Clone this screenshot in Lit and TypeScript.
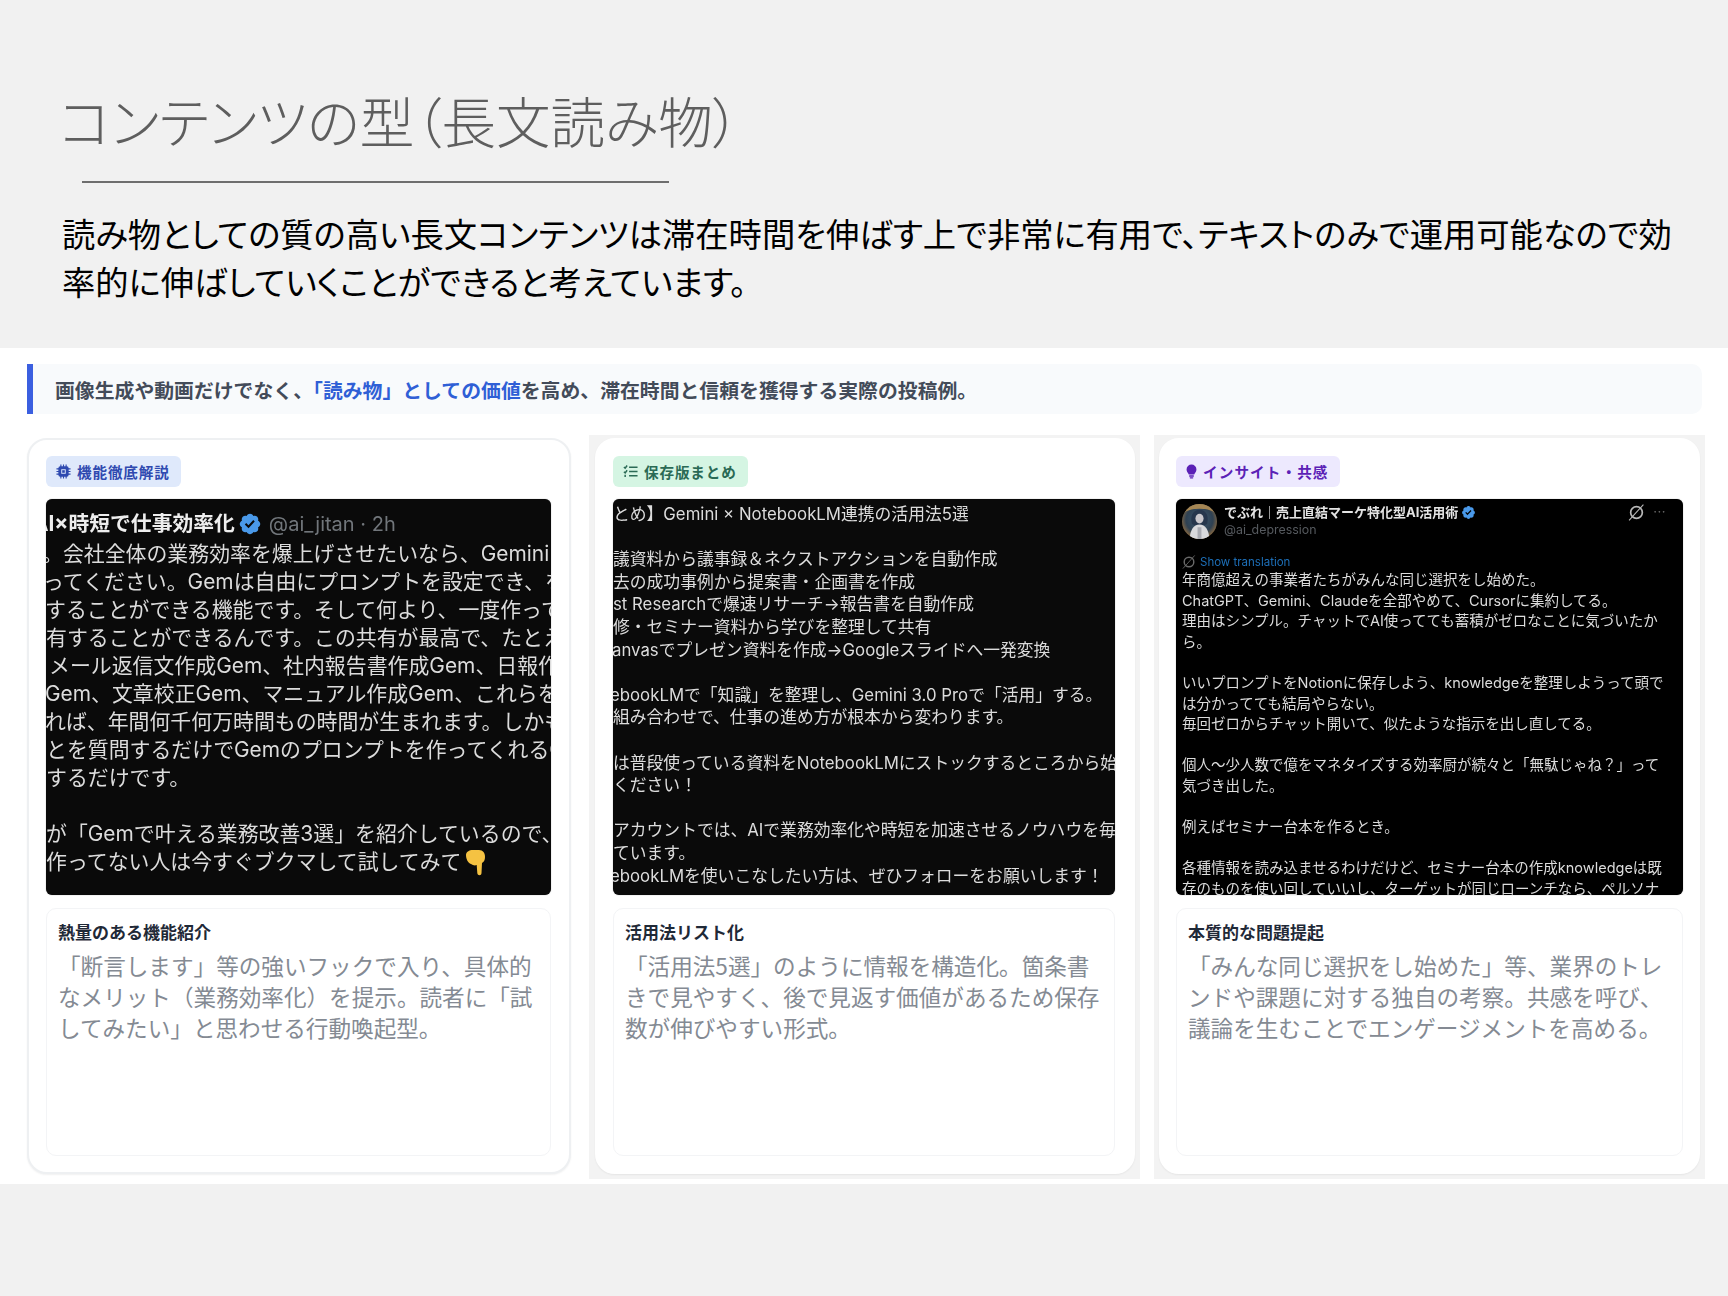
import { css, html, LitElement, nothing } from 'lit';
import { customElement } from 'lit/decorators.js';

type Line = { text: string; shift?: number };

const firstShot: Line[] = [
  { text: '。会社全体の業務効率を爆上げさせたいなら、Gemini', shift: -4 },
  { text: 'ってください。Gemは自由にプロンプトを設定でき、を', shift: -3 },
  { text: 'することができる機能です。そして何より、一度作って', shift: -1 },
  { text: '有することができるんです。この共有が最高で、たとえ', shift: 0 },
  { text: 'メール返信文作成Gem、社内報告書作成Gem、日報作', shift: 3 },
  { text: 'Gem、文章校正Gem、マニュアル作成Gem、これらを', shift: -1 },
  { text: 'れば、年間何千何万時間もの時間が生まれます。しかも', shift: -1 },
  { text: 'とを質問するだけでGemのプロンプトを作ってくれるG', shift: 0 },
  { text: 'するだけです。', shift: 0 },
  { text: '' },
  { text: 'が「Gemで叶える業務改善3選」を紹介しているので、', shift: 0 },
];

const secondShot: Line[] = [
  { text: 'とめ】Gemini × NotebookLM連携の活用法5選' },
  { text: '' },
  { text: '議資料から議事録＆ネクストアクションを自動作成' },
  { text: '去の成功事例から提案書・企画書を作成' },
  { text: 'st Researchで爆速リサーチ→報告書を自動作成' },
  { text: '修・セミナー資料から学びを整理して共有' },
  { text: 'anvasでプレゼン資料を作成→Googleスライドへ一発変換', shift: -1 },
  { text: '' },
  { text: 'ebookLMで「知識」を整理し、Gemini 3.0 Proで「活用」する。', shift: -3 },
  { text: '組み合わせで、仕事の進め方が根本から変わります。' },
  { text: '' },
  { text: 'は普段使っている資料をNotebookLMにストックするところから始' },
  { text: 'ください！' },
  { text: '' },
  { text: 'アカウントでは、AIで業務効率化や時短を加速させるノウハウを毎' },
  { text: 'ています。' },
  { text: 'ebookLMを使いこなしたい方は、ぜひフォローをお願いします！', shift: -3 },
];

const thirdShot: string[] = [
  '年商億超えの事業者たちがみんな同じ選択をし始めた。',
  'ChatGPT、Gemini、Claudeを全部やめて、Cursorに集約してる。',
  '理由はシンプル。チャットでAI使ってても蓄積がゼロなことに気づいたか',
  'ら。',
  '',
  'いいプロンプトをNotionに保存しよう、knowledgeを整理しようって頭で',
  'は分かってても結局やらない。',
  '毎回ゼロからチャット開いて、似たような指示を出し直してる。',
  '',
  '個人〜少人数で億をマネタイズする効率厨が続々と「無駄じゃね？」って',
  '気づき出した。',
  '',
  '例えばセミナー台本を作るとき。',
  '',
  '各種情報を読み込ませるわけだけど、セミナー台本の作成knowledgeは既',
  '存のものを使い回していいし、ターゲットが同じローンチなら、ペルソナ',
];

const verified = html`<svg class="verified" viewBox="0 0 24 24"><path fill="#4a99e9" fill-rule="evenodd" d="M22.25 12c0-1.43-.88-2.67-2.19-3.34.46-1.39.2-2.9-.81-3.91s-2.52-1.27-3.91-.81c-.66-1.31-1.91-2.19-3.34-2.19s-2.67.88-3.33 2.19c-1.4-.46-2.91-.2-3.92.81s-1.26 2.52-.8 3.91c-1.31.67-2.2 1.91-2.2 3.34s.89 2.67 2.2 3.34c-.46 1.39-.21 2.9.8 3.91s2.52 1.26 3.91.81c.67 1.31 1.91 2.19 3.34 2.19s2.68-.88 3.34-2.19c1.39.45 2.9.2 3.91-.81s1.27-2.52.81-3.91c1.31-.67 2.19-1.91 2.19-3.34zm-11.71 4.2L6.8 12.46l1.41-1.42 2.26 2.26 4.8-5.23 1.47 1.36-6.2 6.77z"/></svg>`;

const chipIcon = html`<svg class="tag-icon" viewBox="0 0 16 16" fill="currentColor"><rect x="2.500" y="2.500" width="11" height="11" rx="2"/><path d="M4.6 0.5h1.2v15H4.6zM7.4 0.5h1.2v15H7.4zM10.2 0.5h1.2v15h-1.2zM0.5 4.6h15v1.2H0.5zM0.5 7.4h15v1.2H0.5zM0.5 10.2h15v1.2H0.5z"/><rect x="5.6" y="5.6" width="4.8" height="4.8" fill="#dfe9fb"/><rect x="6.6" y="6.6" width="2.8" height="2.8"/></svg>`;

const listIcon = html`<svg class="tag-icon" viewBox="0 0 16 16" fill="none" stroke="currentColor" stroke-width="1.6"><path d="M1 3.2l1.3 1.3L4.4 1.6M1 8.2l1.3 1.3 2.1-2.9"/><path d="M6.5 3.4H15.5M6.5 8H15.5M6.5 12.6H15.5"/><path d="M1.5 12.6h1.6" stroke-width="2.4"/></svg>`;

const bulbIcon = html`<svg class="tag-icon bulb" viewBox="2 0 12 16" fill="currentColor"><path d="M8 0.4a5.4 5.4 0 0 0-5.4 5.4c0 2.4 1.7 3.5 2.4 5.6h6c.7-2.1 2.400-3.2 2.4-5.6A5.4 5.4 0 0 0 8 0.4z"/><rect x="5.3" y="12.2" width="5.4" height="1.5" rx=".7"/><rect x="6" y="14.2" width="4" height="1.5" rx=".75"/></svg>`;

const grokIcon = (cls: string) => html`<svg class=${cls} viewBox="0 0 16 16" fill="none" stroke="currentColor"><circle cx="8" cy="8" r="5.500" stroke-width="1.6"/><path d="M1 15.500L14.500 0.500" stroke-width="1"/></svg>`;

const avatar = html`<svg class="avatar" viewBox="0 0 36 36">
  <defs>
    <radialGradient id="halo" cx="50%" cy="45%" r="55%">
      <stop offset="0" stop-color="#3c5a74"/>
      <stop offset=".7" stop-color="#2f4152"/>
      <stop offset="1" stop-color="#8a6a42"/>
    </radialGradient>
    <clipPath id="round"><circle cx="18" cy="18" r="18"/></clipPath>
  </defs>
  <g clip-path="url(#round)">
    <rect width="36" height="36" fill="url(#halo)"/>
    <path d="M0 8a18 18 0 0 1 36 0v3C30 3 6 3 0 11z" fill="#a58654"/>
    <path d="M10 20c-2-10 3-14 8-14s10 4 8 14c-1 3-15 3-16 0z" fill="#27374d"/>
    <ellipse cx="18" cy="15" rx="4.2" ry="5" fill="#c9c7cc"/>
    <path d="M8 36c0-9 4-15 10-15s10 6 10 15z" fill="#d9dadd"/>
    <path d="M16 24h4v12h-4z" fill="#a9abb2"/>
  </g>
</svg>`;

@customElement('app-root')
export class AppRoot extends LitElement {
  static override styles = css`
    :host {
      display: block;
      width: 1728px;
      height: 1296px;
      background: #f1f1f1;
      font-family: 'Noto Sans CJK JP', sans-serif;
      overflow: hidden;
    }
    .head {
      height: 348px;
      box-sizing: border-box;
      padding: 86px 50px 0 59px;
    }
    h1 {
      margin: 0;
      height: 72px;
      font-size: 54.5px;
      line-height: 68px;
      font-weight: 300;
      color: #5e5e5e;
      font-feature-settings: 'palt';
      white-space: nowrap;
    }
    .rule {
      width: 587px;
      height: 2px;
      margin: 23px 0 0 23px;
      background: #6e6e6e;
    }
    .lead {
      margin: 26px 0 0 3px;
      font-size: 33.3px;
      line-height: 48px;
      color: #000;
      width: 1620px;
      font-feature-settings: 'palt';
    }
    main {
      height: 836px;
      box-sizing: border-box;
      background: #fff;
      padding: 16px 0 0 27px;
    }
    .banner {
      width: 1675px;
      height: 50px;
      box-sizing: border-box;
      display: flex;
      align-items: center;
      padding-left: 22px;
      border-left: 6px solid #3b5fe0;
      border-radius: 0 10px 10px 0;
      background: #f8fafc;
      font-size: 19.85px;
      font-weight: 700;
      color: #434b59;
    }
    .banner b {
      color: #2f5fd6;
      font-weight: 700;
    }
    .cards {
      display: flex;
      align-items: flex-start;
      margin-top: 21px;
    }
    .col {
      box-sizing: border-box;
      padding-top: 3px;
      padding-bottom: 5px;
    }
    .col-a {
      width: 544px;
    }
    .col-b {
      width: 551px;
      margin-left: 18px;
      padding-left: 6px;
      padding-right: 5px;
      background: #f3f3f3;
    }
    .col-c {
      width: 551px;
      margin-left: 14px;
      padding-left: 5px;
      padding-right: 5px;
      background: #f3f3f3;
    }
    .card {
      height: 736px;
      box-sizing: border-box;
      display: flex;
      flex-direction: column;
      padding: 16px 18px 16px 17px;
      background: #fff;
      border: 2px solid #eef0f2;
      border-radius: 20px;
      box-shadow: 0 1px 2px rgba(0, 0, 0, 0.06);
    }
    .col-b .card,
    .col-c .card {
      border-color: #fff;
    }
    .col-b .card {
      padding-left: 16px;
    }
    .col-c .card {
      padding: 16px 15px 16px 15px;
    }
    .tag {
      align-self: flex-start;
      height: 31px;
      box-sizing: border-box;
      display: flex;
      align-items: center;
      gap: 6px;
      padding: 0 11px 0 10px;
      border-radius: 6px;
      font-size: 14.6px;
      font-weight: 700;
      letter-spacing: 0.85px;
    }
    .tag-icon {
      width: 15px;
      height: 15px;
      flex: none;
    }
    .bulb {
      width: 11px;
    }
    .tag-blue {
      background: #dfe9fb;
      color: #2f4ab0;
    }
    .tag-green {
      background: #d5f5e3;
      color: #2a6a55;
    }
    .tag-purple {
      background: #ede9fe;
      color: #5b21b6;
      letter-spacing: 1.1px;
    }
    .shot {
      height: 396px;
      margin-top: 12px;
      border-radius: 6px;
      background: #0a0a0a;
      color: #dcdcdc;
      font-family: Inter, 'Noto Sans CJK JP', sans-serif;
      overflow: hidden;
      white-space: nowrap;
      box-shadow: 0 0 1px rgba(0, 0, 0, 0.5);
    }
    .shot-inner {
      filter: blur(0.35px);
    }
    .shot-one .shot-inner {
      padding-top: 11px;
      font-size: 20.9px;
      line-height: 28px;
    }
    .shot-two .shot-inner {
      padding-top: 4px;
      font-size: 16.8px;
      line-height: 22.6px;
    }
    .shot-three {
      background: #000;
    }
    .shot-three .shot-inner {
      padding: 5px 0 0 6px;
      font-size: 14.5px;
      line-height: 20.6px;
    }
    .line {
      height: 1lh;
    }
    .poster {
      display: flex;
      align-items: center;
      font-size: 20.8px;
      line-height: 28px;
      height: 28px;
      margin-bottom: 2px;
    }
    .poster strong {
      color: #eee;
      font-weight: 700;
      margin-left: -13px;
    }
    .poster span {
      color: #71767b;
      font-size: 20px;
      margin-left: 7px;
    }
    .verified {
      width: 24px;
      height: 24px;
      margin-left: 3px;
      flex: none;
    }
    .hand {
      display: inline-block;
      width: 22px;
      height: 28px;
      margin-left: 3px;
      vertical-align: -8px;
    }
    .profile {
      display: flex;
      height: 38px;
      gap: 7px;
    }
    .avatar {
      width: 35px;
      height: 35px;
      flex: none;
    }
    .who {
      display: flex;
      flex-direction: column;
      flex: 1;
      font-size: 13px;
      line-height: 17px;
    }
    .who strong {
      display: flex;
      align-items: center;
      color: #e4e4e4;
      font-weight: 700;
    }
    .who strong .verified {
      width: 15px;
      height: 15px;
    }
    .who small {
      font-size: 12.4px;
      color: #565a5f;
    }
    .tools {
      display: flex;
      align-items: flex-start;
      gap: 8px;
      padding-right: 17px;
      color: #b8b8b8;
    }
    .grok {
      width: 17px;
      height: 17px;
    }
    .dots {
      font-size: 13px;
      line-height: 15px;
      color: #6d6d6d;
      letter-spacing: 0.5px;
    }
    .translate {
      display: flex;
      align-items: center;
      gap: 4px;
      height: 18px;
      margin-top: 11px;
      margin-bottom: -1px;
      font-size: 11.5px;
      color: #1d6fb8;
    }
    .grok-small {
      width: 14px;
      height: 14px;
      color: #6a6a6a;
    }
    .note {
      flex: 1;
      margin-top: 13px;
      padding: 11px 11px 0;
      border: 1px solid #f3f4f6;
      border-radius: 10px;
    }
    .note h3 {
      margin: 0;
      font-size: 17px;
      line-height: 24px;
      font-weight: 700;
      color: #1f2937;
    }
    .note p {
      margin: 6px 0 0;
      font-size: 22.6px;
      line-height: 31px;
      color: #848a93;
    }
  `;

  private renderLines(lines: Line[]) {
    return lines.map(
      (l) => html`<div class="line" style=${l.shift ? `margin-left:${l.shift}px` : nothing}>${l.text}</div>`
    );
  }

  override render() {
    return html`
      <section class="head">
        <h1>コンテンツの型（長文読み物）</h1>
        <div class="rule"></div>
        <p class="lead">読み物としての質の高い長文コンテンツは滞在時間を伸ばす上で非常に有用で、テキストのみで運用可能なので効率的に伸ばしていくことができると考えています。</p>
      </section>
      <main>
        <div class="banner">
          <span>画像生成や動画だけでなく、<b>「読み物」としての価値</b>を高め、滞在時間と信頼を獲得する実際の投稿例。</span>
        </div>
        <div class="cards">
          <div class="col col-a">
            <article class="card">
              <div class="tag tag-blue">${chipIcon}機能徹底解説</div>
              <div class="shot shot-one">
                <div class="shot-inner">
                  <div class="poster"><strong>AI×時短で仕事効率化</strong>${verified}<span>@ai_jitan · 2h</span></div>
                  ${this.renderLines(firstShot)}
                  <div class="line">作ってない人は今すぐブクマして試してみて<svg class="hand" viewBox="0 0 22 28"><path fill="#f5c242" d="M1 6c0-3 3-5 7-5h6c4 0 6 3 6 7 0 3-1 5-3 6l-.5 10c0 3-4 3-4.200 0l-.6-8c-2 1-4 0-5.700-1C3 14 1 10 1 6z"/></svg></div>
                </div>
              </div>
              <div class="note">
                <h3>熱量のある機能紹介</h3>
                <p>「断言します」等の強いフックで入り、具体的なメリット（業務効率化）を提示。読者に「試してみたい」と思わせる行動喚起型。</p>
              </div>
            </article>
          </div>
          <div class="col col-b">
            <article class="card">
              <div class="tag tag-green">${listIcon}保存版まとめ</div>
              <div class="shot shot-two">
                <div class="shot-inner">${this.renderLines(secondShot)}</div>
              </div>
              <div class="note">
                <h3>活用法リスト化</h3>
                <p>「活用法5選」のように情報を構造化。箇条書きで見やすく、後で見返す価値があるため保存数が伸びやすい形式。</p>
              </div>
            </article>
          </div>
          <div class="col col-c">
            <article class="card">
              <div class="tag tag-purple">${bulbIcon}インサイト・共感</div>
              <div class="shot shot-three">
                <div class="shot-inner">
                  <div class="profile">
                    ${avatar}
                    <div class="who">
                      <strong>でぶれ｜売上直結マーケ特化型AI活用術${verified}</strong>
                      <small>@ai_depression</small>
                    </div>
                    <div class="tools">${grokIcon('grok')}<span class="dots">···</span></div>
                  </div>
                  <div class="translate">${grokIcon('grok-small')}Show translation</div>
                  ${thirdShot.map((t) => html`<div class="line">${t}</div>`)}
                </div>
              </div>
              <div class="note">
                <h3>本質的な問題提起</h3>
                <p>「みんな同じ選択をし始めた」等、業界のトレンドや課題に対する独自の考察。共感を呼び、議論を生むことでエンゲージメントを高める。</p>
              </div>
            </article>
          </div>
        </div>
      </main>
    `;
  }
}
